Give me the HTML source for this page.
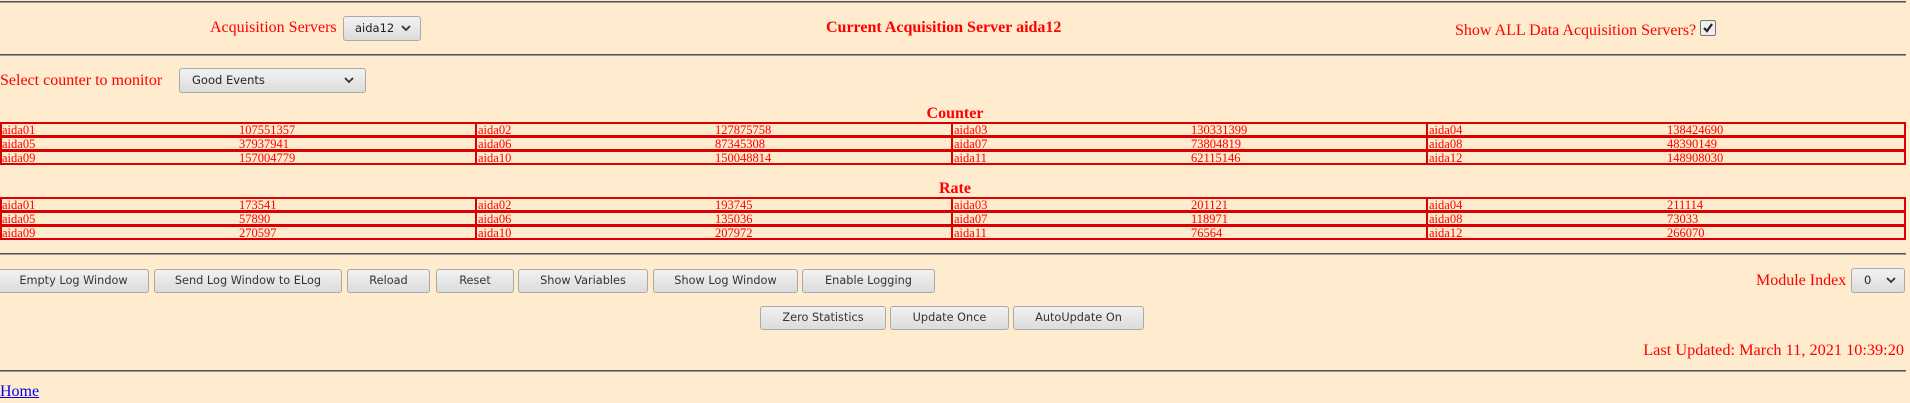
<!DOCTYPE html>
<html><head><style>
body{margin:0;width:1910px;height:403px;background:#ffebcd;position:relative;overflow:hidden;font-family:"Liberation Serif",serif;color:#f00}
.a{position:absolute;white-space:nowrap}
.hr{position:absolute;left:0;width:1906px;height:0;border-top:1px solid #555;border-bottom:1px solid #999}
.lbl{font-size:16px}
.btn{position:absolute;height:22px;border:1px solid #aaa;border-radius:3px;background:linear-gradient(#f2f2f2,#dcdcdc);font-family:"DejaVu Sans",sans-serif;font-size:11.3px;color:#333;text-align:center;line-height:22px;box-sizing:content-box}
.sel{position:absolute;border:1px solid #aaa;border-radius:3px;background:linear-gradient(#f2f2f2,#dcdcdc);font-family:"DejaVu Sans",sans-serif;font-size:11.5px;color:#222;height:23px;line-height:23px}
.sel svg{position:absolute;top:8px}
.row{position:absolute;left:0;width:1902px;height:11px;border:2px solid #d00;font-size:12.5px;line-height:12px}
.row span{position:absolute;top:0}
.v{position:absolute;top:-2px;width:2px;height:15px;background:#d00}
h3{position:absolute;margin:0;font-size:16px;font-weight:bold;width:1910px;text-align:center;left:0}
</style></head><body>
<div class="hr" style="top:1px"></div>
<div class="a lbl" style="left:210px;top:19px">Acquisition Servers</div>
<div class="sel" style="left:343px;top:16px;width:76px"><span style="position:absolute;left:11px">aida12</span><svg style="left:57px" width="10" height="7" viewBox="0 0 10 7"><path d="M1 1L5 5L9 1" fill="none" stroke="#333" stroke-width="1.8"/></svg></div>
<div class="a" style="left:826px;top:19px;font-size:16px;font-weight:bold;">Current Acquisition Server aida12</div>
<div class="a lbl" style="left:1455px;top:22px">Show ALL Data Acquisition Servers?</div>
<div class="a" style="left:1700px;top:20px;width:14px;height:14px;border:1px solid #777;border-radius:2px;background:#eee"><svg width="14" height="14" viewBox="0 0 14 14" style="position:absolute;left:0;top:0"><path d="M3 7L6 10L11 3" fill="none" stroke="#222" stroke-width="2.2"/></svg></div>
<div class="hr" style="top:54px"></div>
<div class="a lbl" style="left:0;top:72px">Select counter to monitor</div>
<div class="sel" style="left:179px;top:68px;width:185px"><span style="position:absolute;left:12px">Good Events</span><svg style="left:164px" width="10" height="7" viewBox="0 0 10 7"><path d="M1 1L5 5L9 1" fill="none" stroke="#333" stroke-width="1.8"/></svg></div>
<h3 style="top:105px">Counter</h3>
<div class="row" style="top:122px"><span style="left:0">aida01</span><span style="left:237px">107551357</span><i class="v" style="left:473px"></i><span style="left:476px">aida02</span><span style="left:713px">127875758</span><i class="v" style="left:949px"></i><span style="left:952px">aida03</span><span style="left:1189px">130331399</span><i class="v" style="left:1424px"></i><span style="left:1427px">aida04</span><span style="left:1665px">138424690</span></div>
<div class="row" style="top:136px"><span style="left:0">aida05</span><span style="left:237px">37937941</span><i class="v" style="left:473px"></i><span style="left:476px">aida06</span><span style="left:713px">87345308</span><i class="v" style="left:949px"></i><span style="left:952px">aida07</span><span style="left:1189px">73804819</span><i class="v" style="left:1424px"></i><span style="left:1427px">aida08</span><span style="left:1665px">48390149</span></div>
<div class="row" style="top:150px"><span style="left:0">aida09</span><span style="left:237px">157004779</span><i class="v" style="left:473px"></i><span style="left:476px">aida10</span><span style="left:713px">150048814</span><i class="v" style="left:949px"></i><span style="left:952px">aida11</span><span style="left:1189px">62115146</span><i class="v" style="left:1424px"></i><span style="left:1427px">aida12</span><span style="left:1665px">148908030</span></div>
<h3 style="top:180px">Rate</h3>
<div class="row" style="top:197px"><span style="left:0">aida01</span><span style="left:237px">173541</span><i class="v" style="left:473px"></i><span style="left:476px">aida02</span><span style="left:713px">193745</span><i class="v" style="left:949px"></i><span style="left:952px">aida03</span><span style="left:1189px">201121</span><i class="v" style="left:1424px"></i><span style="left:1427px">aida04</span><span style="left:1665px">211114</span></div>
<div class="row" style="top:211px"><span style="left:0">aida05</span><span style="left:237px">57890</span><i class="v" style="left:473px"></i><span style="left:476px">aida06</span><span style="left:713px">135036</span><i class="v" style="left:949px"></i><span style="left:952px">aida07</span><span style="left:1189px">118971</span><i class="v" style="left:1424px"></i><span style="left:1427px">aida08</span><span style="left:1665px">73033</span></div>
<div class="row" style="top:225px"><span style="left:0">aida09</span><span style="left:237px">270597</span><i class="v" style="left:473px"></i><span style="left:476px">aida10</span><span style="left:713px">207972</span><i class="v" style="left:949px"></i><span style="left:952px">aida11</span><span style="left:1189px">76564</span><i class="v" style="left:1424px"></i><span style="left:1427px">aida12</span><span style="left:1665px">266070</span></div>
<div class="hr" style="top:253px"></div>
<div class="btn" style="left:-2px;top:269px;width:149px">Empty Log Window</div>
<div class="btn" style="left:154px;top:269px;width:186px">Send Log Window to ELog</div>
<div class="btn" style="left:347px;top:269px;width:81px">Reload</div>
<div class="btn" style="left:436px;top:269px;width:76px">Reset</div>
<div class="btn" style="left:518px;top:269px;width:128px">Show Variables</div>
<div class="btn" style="left:653px;top:269px;width:143px">Show Log Window</div>
<div class="btn" style="left:802px;top:269px;width:131px">Enable Logging</div>
<div class="a lbl" style="left:1756px;top:272px">Module Index</div>
<div class="sel" style="left:1851px;top:268px;width:52px"><span style="position:absolute;left:12px">0</span><svg style="left:34px" width="10" height="7" viewBox="0 0 10 7"><path d="M1 1L5 5L9 1" fill="none" stroke="#333" stroke-width="1.8"/></svg></div>
<div class="btn" style="left:760px;top:306px;width:124px">Zero Statistics</div>
<div class="btn" style="left:890px;top:306px;width:117px">Update Once</div>
<div class="btn" style="left:1013px;top:306px;width:129px">AutoUpdate On</div>
<div class="a" style="right:6px;top:340px;font-size:16.3px">Last Updated: March 11, 2021 10:39:20</div>
<div class="hr" style="top:370px"></div>
<a class="a" style="left:0;top:383px;font-size:16px;color:#00e;text-decoration:underline">Home</a>
</body></html>
